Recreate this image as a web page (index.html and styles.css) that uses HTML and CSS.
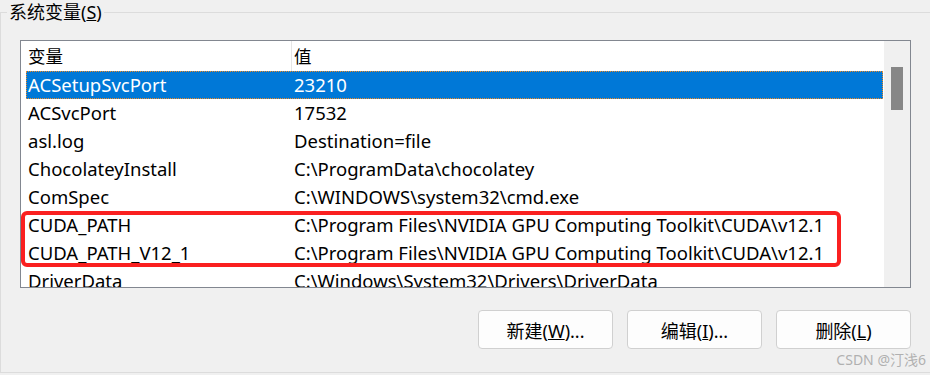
FILE: index.html
```html
<!DOCTYPE html>
<html lang="zh-CN">
<head>
  <meta charset="UTF-8" />
  <title>系统变量</title>
  <link rel="stylesheet" href="styles.css">
</head>
<body>
  <fieldset class="group">
    <legend>系统变量(<u>S</u>)</legend>

    <div class="list">
      <div class="table">
        <div class="head">
          <div class="col name">变量</div>
          <div class="col value">值</div>
        </div>

        <div class="row selected">
          <div class="col name">ACSetupSvcPort</div>
          <div class="col value">23210</div>
        </div>
        <div class="row">
          <div class="col name">ACSvcPort</div>
          <div class="col value">17532</div>
        </div>
        <div class="row">
          <div class="col name">asl.log</div>
          <div class="col value">Destination=file</div>
        </div>
        <div class="row">
          <div class="col name">ChocolateyInstall</div>
          <div class="col value">C:\ProgramData\chocolatey</div>
        </div>
        <div class="row">
          <div class="col name">ComSpec</div>
          <div class="col value">C:\WINDOWS\system32\cmd.exe</div>
        </div>

        <div class="mark">
          <div class="row">
            <div class="col name">CUDA_PATH</div>
            <div class="col value">C:\Program Files\NVIDIA GPU Computing Toolkit\CUDA\v12.1</div>
          </div>
          <div class="row">
            <div class="col name">CUDA_PATH_V12_1</div>
            <div class="col value">C:\Program Files\NVIDIA GPU Computing Toolkit\CUDA\v12.1</div>
          </div>
        </div>

        <div class="row">
          <div class="col name">DriverData</div>
          <div class="col value">C:\Windows\System32\Drivers\DriverData</div>
        </div>
      </div>

      <div class="scrollbar">
        <div class="thumb"></div>
      </div>
    </div>

    <div class="buttons">
      <button class="btn">新建(<u>W</u>)...</button>
      <button class="btn">编辑(<u>I</u>)...</button>
      <button class="btn">删除(<u>L</u>)</button>
    </div>

    <div class="watermark">CSDN @汀浅6</div>
  </fieldset>
</body>
</html>
```

FILE: styles.css
```css
html, body {
  margin: 0;
  padding: 0;
  width: 930px;
  height: 375px;
  overflow: hidden;
  background: #f0f0f0;
  font-family: "Noto Sans", "Noto Sans CJK SC", sans-serif;
  color: #000;
}

.group {
  position: relative;
  margin: 1px 0 0 0;
  padding: 0 0 23px 0;
  width: 940px;
  box-sizing: border-box;
  border: 1px solid #dcdcdc;
  border-right: none;
}

.group legend {
  margin-left: 6px;
  padding: 0 2px;
  font-size: 18px;
  line-height: 22px;
}

.list {
  display: flex;
  width: 891px;
  height: 248px;
  margin: 17px 0 0 19px;
  box-sizing: border-box;
  border: 1px solid #828790;
  background: #fff;
  overflow: hidden;
}

.table {
  flex: 1;
  padding-left: 5px;
  font-size: 18.5px;
}

.head, .row {
  display: flex;
  white-space: nowrap;
}

.head {
  height: 30px;
  line-height: 31px;
  font-size: 17.5px;
}

.head .name {
  border-right: 1px solid #e5e5e5;
}

.row {
  height: 28px;
  line-height: 28px;
}

.col.name {
  width: 266px;
  padding-left: 2px;
  box-sizing: border-box;
}

.col.value {
  padding-left: 2px;
}

.row.selected {
  background: #0078d7;
  color: #fff;
  outline: 1px dotted #f08a24;
  outline-offset: -1px;
}

.mark {
  position: relative;
}

/* red annotation box around the two CUDA rows */
.mark::after {
  content: "";
  position: absolute;
  left: -5px;
  top: 0;
  width: 820px;
  height: 100%;
  box-sizing: border-box;
  border: 4px solid #fa2020;
  border-radius: 6px;
}

.scrollbar {
  width: 26px;
  background: #f0f0f0;
  border-left: 1px solid #fff;
}

.thumb {
  width: 12px;
  height: 43px;
  margin: 26px 0 0 7px;
  background: #878787;
}

.buttons {
  display: flex;
  justify-content: flex-end;
  gap: 14px;
  width: 891px;
  margin: 22px 0 0 19px;
}

.btn {
  width: 135px;
  height: 39px;
  border: 1px solid #d0d0d0;
  border-radius: 4px;
  background: #fdfdfd;
  font-family: "Noto Sans", "Noto Sans CJK SC", sans-serif;
  font-size: 18px;
  color: #000;
  padding: 0;
}

.watermark {
  position: absolute;
  right: 14px;
  bottom: 3px;
  font-size: 14px;
  color: #b0b0b0;
}
```
